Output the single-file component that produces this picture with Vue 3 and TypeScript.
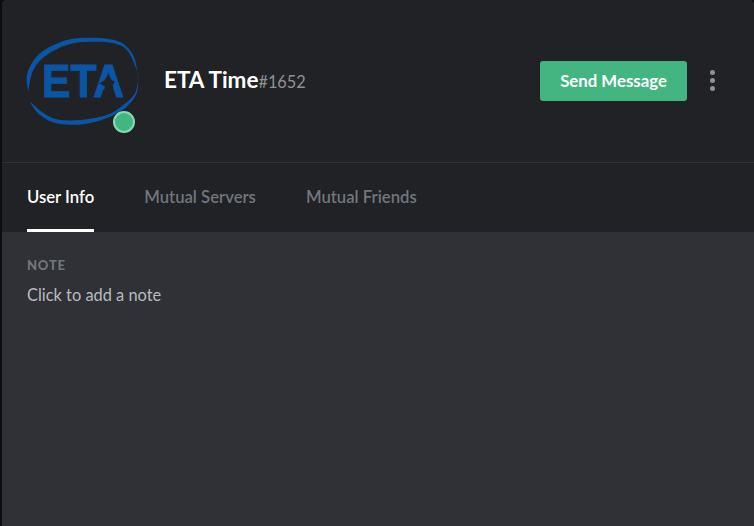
<script setup lang="ts">
const tabs = [
  { label: 'User Info', active: true },
  { label: 'Mutual Servers', active: false },
  { label: 'Mutual Friends', active: false },
];

type Pt = [number, number];

// catmull-rom through the traced points, so the crescents stay smooth
function curve(pts: Pt[]): string {
  let d = '';
  for (let i = 0; i < pts.length - 1; i++) {
    const p0 = pts[Math.max(i - 1, 0)];
    const p1 = pts[i];
    const p2 = pts[i + 1];
    const p3 = pts[Math.min(i + 2, pts.length - 1)];
    const c1 = [p1[0] + (p2[0] - p0[0]) / 6, p1[1] + (p2[1] - p0[1]) / 6];
    const c2 = [p2[0] - (p3[0] - p1[0]) / 6, p2[1] - (p3[1] - p1[1]) / 6];
    d += ` C${c1[0].toFixed(1)} ${c1[1].toFixed(1)} ${c2[0].toFixed(1)} ${c2[1].toFixed(1)} ${p2[0]} ${p2[1]}`;
  }
  return d;
}

const upper: Pt[] = [
  [2.3, 55.7], [1.3, 37.3], [14, 17.3], [40.7, 4], [67.3, 1.7], [90.7, 4.7], [102.3, 12.3], [109, 24], [112.3, 44],
  [110.7, 34], [102.3, 15.7], [90.7, 8], [70.7, 5.7], [44, 8], [20.7, 19], [7.3, 34], [2.3, 55.7],
];
const lower: Pt[] = [
  [112.3, 42.3], [110.7, 57.3], [100.7, 70.7], [84, 80.7], [57.3, 88.3], [30.7, 87.3], [14, 79], [4, 65.7],
  [15.7, 75.7], [30.7, 83.3], [54, 84], [80.7, 79], [97.3, 69], [109, 57.3], [112.3, 42.3],
];

const ringTop = `M${upper[0][0]} ${upper[0][1]}${curve(upper)} Z`;
const ringBottom = `M${lower[0][0]} ${lower[0][1]}${curve(lower)} Z`;
</script>

<template>
  <div class="backdrop">
    <div class="modal">
      <header class="top">
        <div class="avatar">
          <svg width="114" height="90" viewBox="0 0 114 90">
            <path class="ring" :d="ringTop" />
            <path class="ring" :d="ringBottom" />
            <text class="logo-text" x="16" y="61" textLength="82" lengthAdjust="spacingAndGlyphs">ETA</text>
            <path class="notch" d="M82.3 39 L85.7 44 L89 45.7 L86.7 49 L89 62 L76 62 L79 50.7 L73.3 47.3 L78 44.7 Z" />
          </svg>
          <span class="status"></span>
        </div>
        <div class="name">
          <span class="username">ETA Time</span><span class="tag">#1652</span>
        </div>
        <button class="send">Send Message</button>
        <div class="more">
          <i></i><i></i><i></i>
        </div>
      </header>
      <nav class="tabs">
        <div v-for="tab in tabs" :key="tab.label" class="tab" :class="{ active: tab.active }">{{ tab.label }}</div>
      </nav>
      <section class="body">
        <h3>NOTE</h3>
        <p>Click to add a note</p>
      </section>
    </div>
  </div>
</template>

<style>
html, body {
  margin: 0;
  background: #0c0d0e;
}
</style>

<style scoped>
.backdrop {
  width: 754px;
  height: 526px;
  padding-left: 2px;
  box-sizing: border-box;
  overflow: hidden;
  font-family: "Lato", "Open Sans", sans-serif;
}

.modal {
  height: 100%;
  display: flex;
  flex-direction: column;
  border-radius: 5px 5px 0 0;
  overflow: hidden;
  background: #2f3136;
}

.top {
  height: 162px;
  flex: none;
  display: flex;
  align-items: center;
  padding: 0 39px 0 24px;
  background: #202225;
  border-bottom: 1px solid #2f3136;
}

.avatar {
  position: relative;
  width: 114px;
  height: 90px;
  margin-right: 24px;
  margin-top: -1px;
}

.avatar svg {
  display: block;
}

.ring {
  fill: #0a55a5;
}

.logo-text {
  font-family: "Liberation Sans", sans-serif;
  font-weight: 700;
  font-size: 46px;
  fill: #0a55a5;
  stroke: #0a55a5;
  stroke-width: 1px;
}

.notch {
  fill: #202225;
}

.status {
  position: absolute;
  left: 87px;
  top: 75px;
  width: 18px;
  height: 18px;
  border-radius: 50%;
  background: #43b581;
  border: 2px solid #87dbb4;
}

.name {
  flex: 1;
  margin-top: 0;
  line-height: 28px;
}

.username {
  font-size: 22.5px;
  font-weight: 700;
  color: #fff;
}

.tag {
  font-size: 16.3px;
  color: #8e9297;
}

.send {
  width: 147px;
  height: 40px;
  border: 0;
  border-radius: 3px;
  background: #43b581;
  color: #fff;
  font-family: inherit;
  font-size: 16.8px;
  font-weight: 700;
  margin-top: -1px;
}

.more {
  display: flex;
  flex-direction: column;
  gap: 3px;
  margin-left: 23px;
  margin-top: -2px;
}

.more i {
  display: block;
  width: 5px;
  height: 5px;
  border-radius: 50%;
  background: #8e9297;
}

.tabs {
  height: 69px;
  flex: none;
  display: flex;
  gap: 50px;
  padding-left: 25px;
  background: #202225;
}

.tab {
  font-size: 16.7px;
  font-weight: 600;
  line-height: 68px;
  color: #72767d;
  box-sizing: border-box;
}

.tab.active {
  color: #fff;
  border-bottom: 3px solid #fff;
}

.body {
  flex: 1;
  padding: 26px 25px 0;
}

h3 {
  margin: 0;
  font-size: 13px;
  line-height: 15px;
  font-weight: 900;
  letter-spacing: 0.8px;
  color: #72767d;
}

p {
  margin: 12px 0 0;
  font-size: 16.4px;
  line-height: 20px;
  color: #b9bbbe;
}
</style>
